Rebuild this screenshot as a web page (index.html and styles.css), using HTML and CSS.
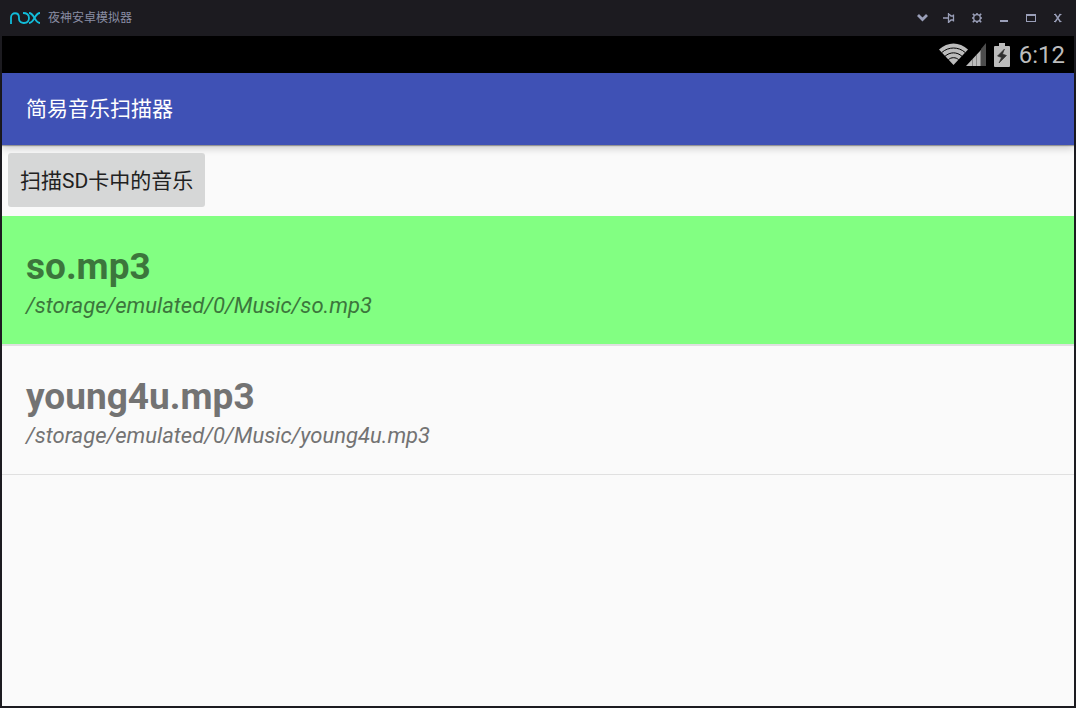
FILE: index.html
```html
<!DOCTYPE html>
<html lang="zh-CN">
<head>
<meta charset="utf-8">
<meta name="viewport" content="width=device-width, initial-scale=1">
<title>夜神安卓模拟器</title>
<link rel="stylesheet" href="styles.css">
</head>
<body>
<header class="titlebar">
  <svg class="logo" width="32" height="14" viewBox="0 0 32 14" fill="none" stroke="#12bcd9" stroke-width="1.800" aria-hidden="true">
    <path d="M2 13V6.500C2 .800 10 .800 10 6.500V8C10 13.500 20 13.500 20 7C20 3.500 18 2 14 2"/>
    <path d="M20 2C25.500 2 25.500 12 31 12M31 2C25.500 2 25.500 12 20 12"/>
  </svg>
  <span class="product">夜神安卓模拟器</span>
  <div class="window-controls">
    <button type="button" aria-label="展开"><svg width="13" height="14" viewBox="0 0 13 14"><path d="M2 4l4.500 4.500L11 4" fill="none" stroke="currentColor" stroke-width="2.800"/></svg></button>
    <button type="button" aria-label="置顶"><svg width="13" height="14" viewBox="0 0 13 14" fill="none" stroke="currentColor" stroke-width="1.300"><path d="M0 7h5M5.500 2v10M5.500 2.500l2.500 2.500H10.500v4H8l-2.500 2.500M10.500 3.500v7"/></svg></button>
    <button type="button" aria-label="设置"><svg width="13" height="14" viewBox="0 0 13 14" fill="none" stroke="currentColor"><circle cx="7" cy="7" r="3.300" stroke-width="1.300"/><path d="M7 2v2M7 10v2M2 7h2M10 7h2M2.800 2.800l1.800 1.800M9.400 9.400l1.800 1.800M11.200 2.800L9.400 4.600M4.600 9.400l-1.800 1.800" stroke-width="1.600"/></svg></button>
    <button type="button" aria-label="最小化"><svg width="13" height="14" viewBox="0 0 13 14"><path d="M3 9h8v2H3z" fill="currentColor"/></svg></button>
    <button type="button" aria-label="最大化"><svg width="13" height="14" viewBox="0 0 13 14"><path d="M2 3h10v8H2zM3 5v5h8V5z" fill="currentColor" fill-rule="evenodd"/></svg></button>
    <button type="button" aria-label="关闭"><svg width="13" height="14" viewBox="0 0 13 14" fill="none" stroke="currentColor"><path d="M4 3l5.500 8M9.500 3L4 11" stroke-width="1.400"/><path d="M3 3.500h2M8.500 3.500h2M3 10.500h2M8.500 10.500h2"/></svg></button>
  </div>
</header>
<div class="device">
  <div class="statusbar">
    <svg class="network" width="48" height="26" viewBox="0 0 48 26" aria-hidden="true">
      <path d="M0 7.500C8.500-.500 20.500-.500 29 7.500L14.500 23z" fill="#bcbcbc"/>
      <path d="M2.800 10.500C9.500 4.500 19.500 4.500 26.200 10.500M6 14.300C11 9.700 18 9.700 23 14.300M9.300 17.800C12 15 17 15 19.700 17.800" fill="none" stroke="#000" stroke-width="1"/>
      <path d="M27 24L42 8V24z" fill="#bcbcbc"/>
      <path d="M42 24V7L47 1V24z" fill="#4d4d4d"/>
      <path d="M33.500 17v7M37.500 13v11M41.500 9v15" stroke="#707070" stroke-width=".700"/>
    </svg>
    <svg class="battery" width="16" height="24" viewBox="0 0 16 24" aria-hidden="true">
      <path d="M5 0h6v3h4q1 0 1 1v19q0 1-1 1H1q-1 0-1-1V4q0-1 1-1h4z" fill="#bcbcbc"/>
      <path d="M10.500 6L3.500 13 7.500 14.500 5 20 12.500 12.500 8.500 11z" fill="#303030" stroke="#303030" stroke-width=".600"/>
    </svg>
    <time>6:12</time>
  </div>
  <div class="appbar"><h1>简易音乐扫描器</h1></div>
  <main>
    <div class="actions"><button type="button" class="scan">扫描SD卡中的音乐</button></div>
    <ul class="tracks">
      <li class="track track-selected"><h2>so.mp3</h2><p>/storage/emulated/0/Music/so.mp3</p></li>
      <li class="track"><h2>young4u.mp3</h2><p>/storage/emulated/0/Music/young4u.mp3</p></li>
    </ul>
  </main>
</div>
</body>
</html>
```
FILE: styles.css
```css
* {
  box-sizing: border-box;
}

body {
  display: flex;
  flex-direction: column;
  min-height: 100vh;
  margin: 0;
  background: #1c1b20;
  font-family: Roboto, "Noto Sans CJK SC", sans-serif;
}

h1, h2, p, ul {
  margin: 0;
  padding: 0;
}

.titlebar {
  display: flex;
  align-items: center;
  height: 36px;
  padding: 0 7px 0 9px;
  color: #8a8ea4;
}

.product {
  margin-left: 7px;
  font-size: 12px;
  line-height: 16px;
}

.window-controls {
  display: flex;
  gap: 4px;
  margin-left: auto;
}

.window-controls button {
  display: grid;
  place-items: center;
  width: 23px;
  height: 24px;
  padding: 0;
  border: 0;
  background: none;
  color: #9a9fb8;
}

.device {
  display: flex;
  flex: 1;
  flex-direction: column;
  margin: 0 2px 2px;
  background: #fafafa;
}

.statusbar {
  display: flex;
  align-items: center;
  justify-content: flex-end;
  height: 37px;
  padding-right: 9px;
  background: #000;
  color: #bcbcbc;
}

.battery {
  margin: 0 9px 0 7px;
}

.statusbar time {
  font-size: 24px;
  line-height: 28px;
}

.appbar {
  display: flex;
  align-items: center;
  height: 72px;
  padding: 0 24px;
  background: #3f51b5;
  box-shadow: 0 1px 1px rgba(0, 0, 0, .3), 0 3px 8px rgba(0, 0, 0, .2);
}

.appbar h1 {
  color: #fff;
  font-size: 21px;
  font-weight: 400;
  line-height: 32px;
}

.actions {
  padding: 8px 6px 9px;
}

.scan {
  display: block;
  height: 54px;
  padding: 2px 12px 0;
  border: 0;
  border-radius: 3px;
  background: #d6d7d7;
  color: #212121;
  font: inherit;
  font-size: 21px;
  line-height: 32px;
}

.tracks {
  list-style: none;
}

.track {
  padding: 27px 24px 24px;
  border-bottom: 2px solid #e0e0e0;
  color: #737373;
}

.track:last-child {
  border-bottom-width: 1px;
}

.track-selected {
  background: #82ff82;
  background-clip: padding-box;
  color: #3c763c;
}

.track h2 {
  font-size: 37px;
  font-weight: 700;
  line-height: 48px;
}

.track p {
  font-size: 22px;
  font-style: italic;
  line-height: 29px;
}
```
